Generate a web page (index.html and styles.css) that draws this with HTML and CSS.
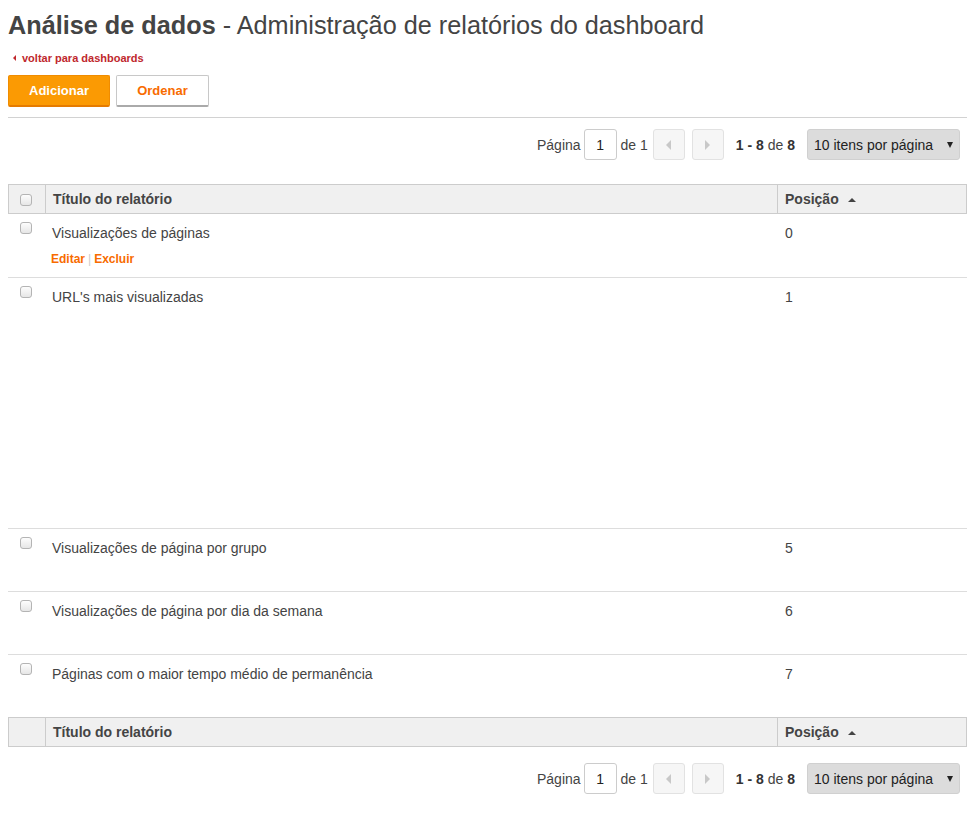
FILE: index.html
```html
<!DOCTYPE html>
<html lang="pt-BR">
<head>
  <meta charset="UTF-8">
  <title>Análise de dados - Administração de relatórios do dashboard</title>
  <link rel="stylesheet" href="styles.css">
</head>
<body>

  <!-- Header -->
  <h1 class="page-title"><strong>Análise de dados</strong> - Administração de relatórios do dashboard</h1>
  <a class="back-link" href="#"><span class="back-arrow"></span>voltar para dashboards</a>

  <div class="actions">
    <button class="btn btn-primary">Adicionar</button>
    <button class="btn btn-default">Ordenar</button>
  </div>

  <hr class="divider">

  <!-- Top pagination -->
  <div class="pager">
    <span>Página</span>
    <input class="page-input" type="text" value="1">
    <span>de 1</span>
    <span class="page-btn"><span class="arrow-left"></span></span>
    <span class="page-btn next"><span class="arrow-right"></span></span>
    <span class="count"><b>1 - 8</b> de <b>8</b></span>
    <span class="per-page">10 itens por página<span class="caret"></span></span>
  </div>

  <!-- Reports table -->
  <table class="grid">
    <thead>
      <tr>
        <th class="col-check"><span class="check"></span></th>
        <th>Título do relatório</th>
        <th class="col-pos">Posição <span class="sort-up"></span></th>
      </tr>
    </thead>
    <tbody>
      <tr>
        <td class="col-check"><span class="check"></span></td>
        <td>
          Visualizações de páginas
          <div class="row-actions">
            <a href="#">Editar</a><span class="sep">|</span><a href="#">Excluir</a>
          </div>
        </td>
        <td class="col-pos">0</td>
      </tr>
      <tr class="tall">
        <td class="col-check"><span class="check"></span></td>
        <td>URL's mais visualizadas</td>
        <td class="col-pos">1</td>
      </tr>
      <tr>
        <td class="col-check"><span class="check"></span></td>
        <td>Visualizações de página por grupo</td>
        <td class="col-pos">5</td>
      </tr>
      <tr>
        <td class="col-check"><span class="check"></span></td>
        <td>Visualizações de página por dia da semana</td>
        <td class="col-pos">6</td>
      </tr>
      <tr>
        <td class="col-check"><span class="check"></span></td>
        <td>Páginas com o maior tempo médio de permanência</td>
        <td class="col-pos">7</td>
      </tr>
    </tbody>
    <tfoot>
      <tr>
        <th class="col-check"></th>
        <th>Título do relatório</th>
        <th class="col-pos">Posição <span class="sort-up"></span></th>
      </tr>
    </tfoot>
  </table>

  <!-- Bottom pagination -->
  <div class="pager pager-bottom">
    <span>Página</span>
    <input class="page-input" type="text" value="1">
    <span>de 1</span>
    <span class="page-btn"><span class="arrow-left"></span></span>
    <span class="page-btn next"><span class="arrow-right"></span></span>
    <span class="count"><b>1 - 8</b> de <b>8</b></span>
    <span class="per-page">10 itens por página<span class="caret"></span></span>
  </div>

</body>
</html>
```

FILE: styles.css
```css
body {
  margin: 0;
  padding: 0 8px;
  font-family: "Liberation Sans", Arial, sans-serif;
  color: #444;
  font-size: 14px;
  background: #fff;
}

.page-title {
  margin: 7px 0 0;
  font-size: 25.25px;
  line-height: 36px;
  font-weight: normal;
  color: #444;
}

.page-title strong {
  font-weight: bold;
}

.back-link {
  display: inline-flex;
  align-items: center;
  margin-top: 8px;
  padding-left: 5px;
  font-size: 11px;
  line-height: 14px;
  font-weight: bold;
  color: #c0282d;
  text-decoration: none;
}

.back-arrow {
  width: 0;
  height: 0;
  border-top: 3.5px solid transparent;
  border-bottom: 3.5px solid transparent;
  border-right: 3px solid #c0282d;
  margin-right: 6px;
}

.actions {
  display: flex;
  gap: 6px;
  margin-top: 10px;
}

.btn {
  height: 32px;
  padding: 0 20px;
  font-family: inherit;
  font-size: 13px;
  font-weight: bold;
  border-radius: 2px;
  cursor: pointer;
}

.btn-primary {
  background: #fb9a03;
  color: #fff;
  border: 1px solid #f08c00;
  border-bottom: 2px solid #e57b00;
  width: 102px;
}

.btn-default {
  background: #fff;
  color: #f86b00;
  border: 1px solid #c8c8c8;
  border-bottom: 2px solid #aaa;
  width: 93px;
}

.divider {
  border: none;
  border-top: 1px solid #d2d2d2;
  margin: 10px 0 0;
}

.pager {
  display: flex;
  justify-content: flex-end;
  align-items: center;
  margin-top: 11px;
  padding-right: 7px;
  height: 31px;
  font-size: 14px;
  color: #444;
}

.page-input {
  box-sizing: border-box;
  width: 33px;
  height: 31px;
  margin: 0 4px 0 3px;
  border: 1px solid #ccc;
  border-radius: 3px;
  text-align: center;
  font-family: inherit;
  font-size: 14px;
  color: #222;
  padding: 0;
}

.page-btn {
  box-sizing: border-box;
  display: flex;
  align-items: center;
  justify-content: center;
  width: 32px;
  height: 31px;
  margin-left: 5px;
  border: 1px solid #e2e2e2;
  border-radius: 3px;
  background: #f6f6f6;
}

.page-btn.next {
  margin-left: 7px;
}

.arrow-left {
  border-top: 5px solid transparent;
  border-bottom: 5px solid transparent;
  border-right: 5px solid #c8c8c8;
}

.arrow-right {
  border-top: 5px solid transparent;
  border-bottom: 5px solid transparent;
  border-left: 5px solid #c8c8c8;
}

.count {
  margin-left: 12px;
}

.count b {
  color: #333;
}

.per-page {
  box-sizing: border-box;
  display: flex;
  align-items: center;
  justify-content: space-between;
  width: 153px;
  height: 31px;
  margin-left: 12px;
  padding: 0 6px 0 6px;
  background: #dcdcdc;
  border: 1px solid #d0d0d0;
  border-radius: 3px;
  color: #222;
}

.caret {
  border-left: 3.5px solid transparent;
  border-right: 3.5px solid transparent;
  border-top: 6px solid #222;
}

.grid {
  width: 100%;
  margin-top: 24px;
  border-collapse: separate;
  border-spacing: 0;
}

.grid th {
  height: 28px;
  padding: 0 7px;
  background: #f0f0f0;
  border-top: 1px solid #ccc;
  border-bottom: 1px solid #ccc;
  border-right: 1px solid #ccc;
  text-align: left;
  font-weight: bold;
  color: #444;
  font-size: 14px;
}

.grid th:first-child {
  border-left: 1px solid #ccc;
}

.grid tfoot th {
  border-top: 1px solid #ccc;
}

.grid .col-check {
  width: 34px;
  padding: 0 2px 0 0;
  text-align: center;
}

.grid .col-pos {
  width: 174px;
}

.grid td {
  height: 45px;
  padding: 9px 6px 8px;
  vertical-align: top;
  line-height: 20px;
  border-bottom: 1px solid #ddd;
  color: #444;
}

.grid td.col-pos {
  padding-left: 7px;
}

.grid tbody tr:first-child td {
  height: 46px;
}

.grid tbody tr:last-child td {
  border-bottom: none;
}

.grid tr.tall td {
  height: 233px;
}

.grid td.col-check {
  padding: 8px 2px 0 0;
}

.check {
  display: inline-block;
  box-sizing: border-box;
  width: 12px;
  height: 12px;
  border: 1px solid #b4b4b4;
  border-radius: 3px;
  background: linear-gradient(#fdfdfd, #e6e6e6);
  vertical-align: middle;
}

.grid td .check {
  vertical-align: top;
}

.sort-up {
  display: inline-block;
  margin-left: 5px;
  vertical-align: middle;
  border-left: 4px solid transparent;
  border-right: 4px solid transparent;
  border-bottom: 4px solid #444;
}

.row-actions {
  margin-top: 6px;
  margin-left: -1px;
  font-size: 12px;
  line-height: 20px;
}

.row-actions a {
  color: #f86b00;
  font-weight: bold;
  text-decoration: none;
}

.row-actions .sep {
  color: #ccc;
  margin: 0 3px;
  font-weight: normal;
}

.pager-bottom {
  margin-top: 16px;
}
```
